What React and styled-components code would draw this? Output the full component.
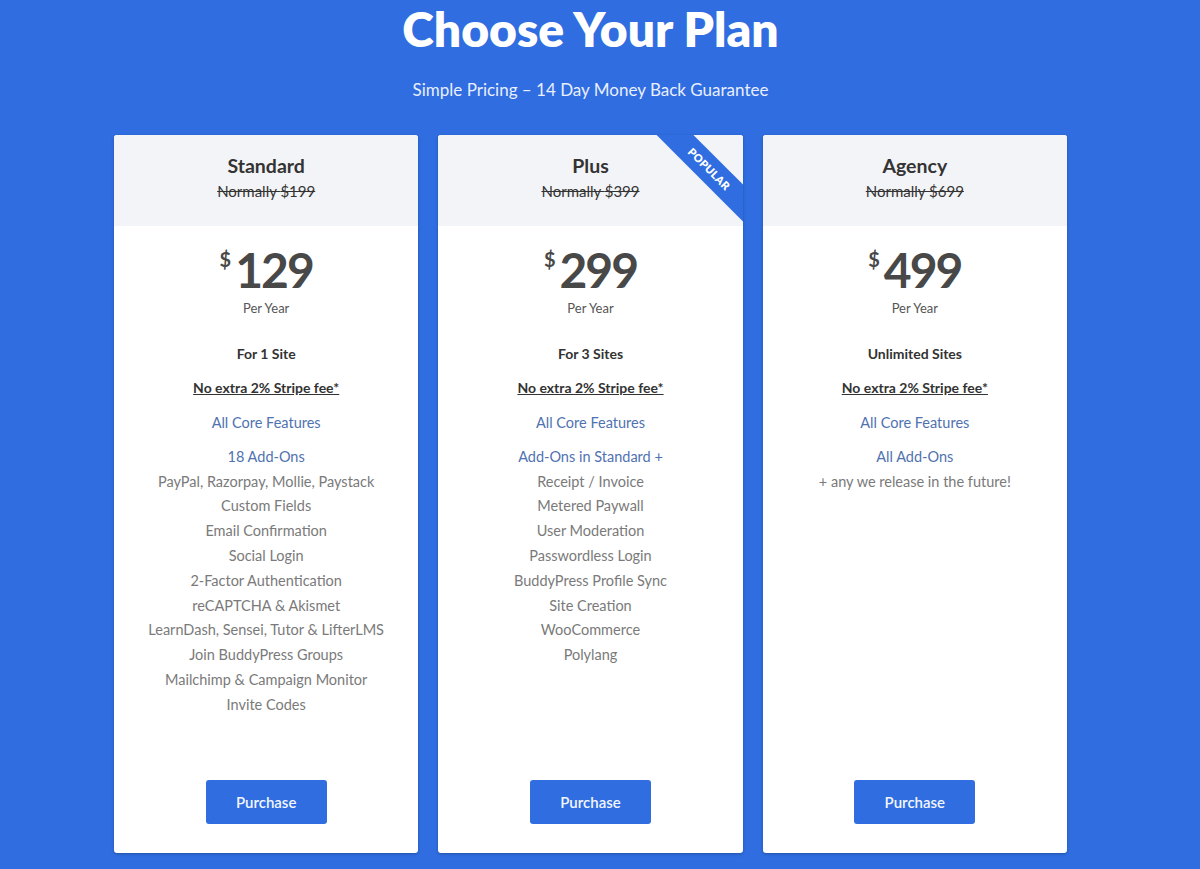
import React from 'react';
import styled, { createGlobalStyle } from 'styled-components';

const GlobalStyle = createGlobalStyle`
  body {
    margin: 0;
    background: #2f6de0;
    font-family: Lato, "Open Sans", sans-serif;
  }
`;

const Page = styled.div`
  height: 869px;
  overflow: hidden;
  color: #fff;
`;

const Warp = styled.div`
  width: 953px;
  margin-left: 114px;
`;

const Title = styled.h1`
  margin: 0;
  padding-top: 4px;
  font-size: 48px;
  line-height: 50px;
  font-weight: 800;
  text-align: center;
`;

const Subtitle = styled.p`
  margin: 26px 0 0;
  font-size: 17px;
  line-height: 20px;
  text-align: center;
  color: #e9efff;
`;

const Plans = styled.div`
  display: grid;
  grid-template-columns: repeat(3, 1fr);
  gap: 20px;
  margin-top: 35px;
`;

const Card = styled.div`
  position: relative;
  display: flex;
  flex-direction: column;
  overflow: hidden;
  background: #fff;
  border-radius: 3px;
  box-shadow: 0 1px 3px rgba(0, 0, 0, 0.25);
  text-align: center;
`;

const Head = styled.div`
  background: #f3f4f7;
  padding: 19px 0 25px;
`;

const Name = styled.h3`
  margin: 0;
  font-size: 19.5px;
  line-height: 24px;
  font-weight: 700;
  color: #333;
`;

const Normally = styled.div`
  margin-top: 3px;
  font-size: 15px;
  line-height: 20px;
  color: #333;
  text-decoration: line-through;
`;

const Price = styled.div`
  margin-top: 19px;
  display: flex;
  justify-content: center;
  color: #484848;
  font-size: 48px;
  line-height: 50px;
  font-weight: 700;
  letter-spacing: -2px;

  & > sup {
    font-size: 20px;
    line-height: 20px;
    margin-top: 4px;
    margin-right: 4px;
    letter-spacing: 0;
  }
`;

const PerYear = styled.div`
  margin-top: 3px;
  font-size: 13px;
  line-height: 20px;
  color: #555;
`;

const Sites = styled.div`
  margin-top: 26px;
  font-size: 14px;
  line-height: 20px;
  font-weight: 700;
  color: #333;
`;

const Stripe = styled.div`
  margin-top: 14px;
  font-size: 14px;
  line-height: 20px;
  font-weight: 700;
  color: #333;
  text-decoration: underline;
`;

const Features = styled.ul`
  list-style: none;
  margin: 13px 0 0;
  padding: 0;
  font-size: 14.5px;
  line-height: 24.8px;
  color: #7a7a7a;
`;

const Feature = styled.li`
  color: ${(p) => (p.$accent ? '#4f72b0' : '#7a7a7a')};
  margin-top: ${(p) => (p.$gap ? '9px' : '0')};
`;

const Footer = styled.div`
  margin-top: auto;
  padding: 62px 0 29px;
  display: flex;
  justify-content: center;
`;

const Button = styled.button`
  width: 121px;
  height: 44px;
  border: 0;
  border-radius: 3px;
  background: #2f6de0;
  color: #f2f6ff;
  font-family: inherit;
  font-size: 15px;
  font-weight: 600;
  cursor: pointer;
`;

const Ribbon = styled.div`
  position: absolute;
  top: 0;
  right: 0;
  width: 90px;
  height: 90px;
  overflow: hidden;

  & > span {
    position: absolute;
    left: -9px;
    top: 21px;
    width: 130px;
    height: 26px;
    line-height: 26px;
    background: #2f6de0;
    color: #fff;
    font-size: 11px;
    font-weight: 800;
    letter-spacing: 0.3px;
    transform: rotate(45deg);
  }
`;

const plans = [
  {
    name: 'Standard',
    normally: '$199',
    price: '129',
    sites: 'For 1 Site',
    addons: '18 Add-Ons',
    list: [
      'PayPal, Razorpay, Mollie, Paystack',
      'Custom Fields',
      'Email Confirmation',
      'Social Login',
      '2-Factor Authentication',
      'reCAPTCHA & Akismet',
      'LearnDash, Sensei, Tutor & LifterLMS',
      'Join BuddyPress Groups',
      'Mailchimp & Campaign Monitor',
      'Invite Codes',
    ],
  },
  {
    name: 'Plus',
    normally: '$399',
    price: '299',
    sites: 'For 3 Sites',
    addons: 'Add-Ons in Standard +',
    popular: true,
    list: [
      'Receipt / Invoice',
      'Metered Paywall',
      'User Moderation',
      'Passwordless Login',
      'BuddyPress Profile Sync',
      'Site Creation',
      'WooCommerce',
      'Polylang',
    ],
  },
  {
    name: 'Agency',
    normally: '$699',
    price: '499',
    sites: 'Unlimited Sites',
    addons: 'All Add-Ons',
    list: ['+ any we release in the future!'],
  },
];

const App = () => {
  return (
    <Page>
      <GlobalStyle />
      <Warp>
        <Title>Choose Your Plan</Title>
        <Subtitle>Simple Pricing – 14 Day Money Back Guarantee</Subtitle>
        <Plans>
          {plans.map((plan) => (
            <Card key={plan.name}>
              {plan.popular && (
                <Ribbon>
                  <span>POPULAR</span>
                </Ribbon>
              )}
              <Head>
                <Name>{plan.name}</Name>
                <Normally>Normally {plan.normally}</Normally>
              </Head>
              <Price>
                <sup>$</sup>
                {plan.price}
              </Price>
              <PerYear>Per Year</PerYear>
              <Sites>{plan.sites}</Sites>
              <Stripe>No extra 2% Stripe fee*</Stripe>
              <Features>
                <Feature $accent>All Core Features</Feature>
                <Feature $accent $gap>{plan.addons}</Feature>
                {plan.list.map((item) => (
                  <Feature key={item}>{item}</Feature>
                ))}
              </Features>
              <Footer>
                <Button>Purchase</Button>
              </Footer>
            </Card>
          ))}
        </Plans>
      </Warp>
    </Page>
  );
};

export default App;
